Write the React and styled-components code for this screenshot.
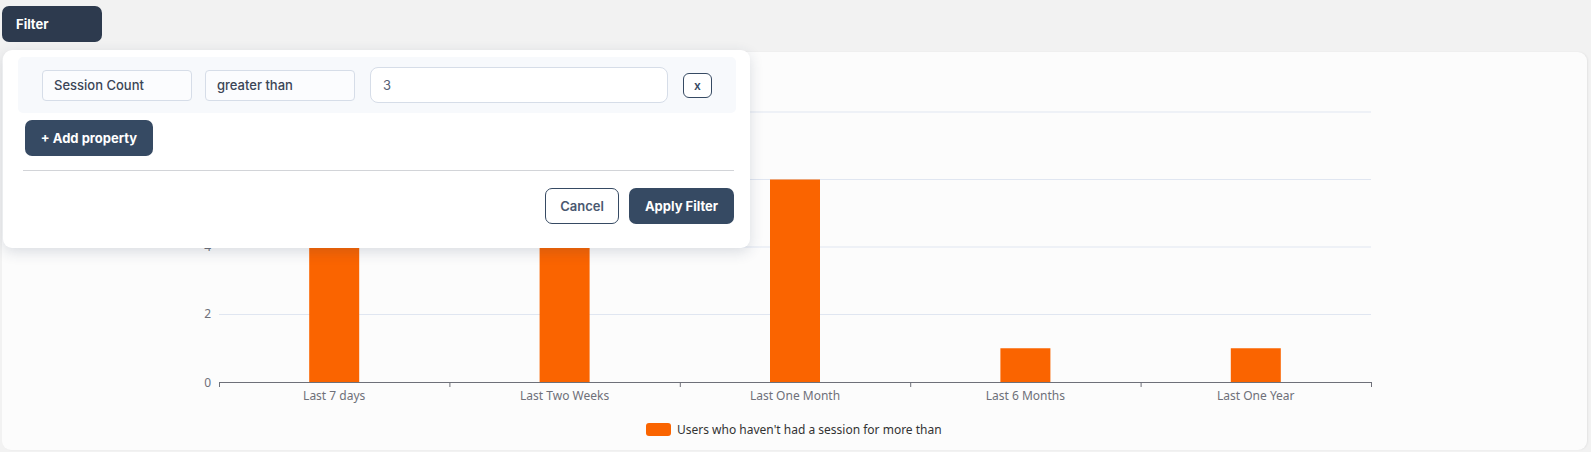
import React from 'react';
import styled, { createGlobalStyle } from 'styled-components';

const GlobalStyle = createGlobalStyle`
  html, body {
    margin: 0;
    padding: 0;
    background: #f2f2f2;
  }
  body {
    font-family: Inter, "Noto Sans", sans-serif;
  }
`;

const Page = styled.div`
  padding: 6px 4px 2px 2px;
  box-sizing: border-box;
`;

const Toolbar = styled.div`
  position: relative;
  display: flex;
  z-index: 2;
`;

const DarkButton = styled.button`
  display: block;
  font-family: Inter, sans-serif;
  font-weight: 700;
  font-size: 13px;
  color: #ffffff;
  background: ${(p) => (p.$deep ? '#2d3a4e' : '#364a63')};
  border: none;
  border-radius: 7px;
  height: ${(p) => p.$h || 36}px;
  width: ${(p) => p.$w}px;
  padding: 0 0 0 ${(p) => (p.$left ? '14px' : '0')};
  text-align: ${(p) => (p.$left ? 'left' : 'center')};
  cursor: pointer;
`;

const OutlineButton = styled.button`
  display: block;
  font-family: Inter, sans-serif;
  font-weight: 600;
  font-size: 13px;
  color: #4a5870;
  background: #ffffff;
  border: 1px solid #364a63;
  border-radius: 7px;
  height: 36px;
  width: 74px;
  cursor: pointer;
`;

const Popover = styled.div`
  position: absolute;
  top: 44px;
  left: 1px;
  width: 747px;
  box-sizing: border-box;
  padding: 7px 14px 24px 15px;
  background: #ffffff;
  border-radius: 9px;
  box-shadow: 0 4px 14px rgba(40, 55, 90, 0.16);
`;

const PropertyRow = styled.div`
  display: flex;
  align-items: center;
  height: 56px;
  padding: 0 24px;
  background: #f7f9fc;
  border-radius: 5px;
`;

const SelectBox = styled.div`
  width: 150px;
  height: 31px;
  box-sizing: border-box;
  margin-right: ${(p) => p.$gap}px;
  padding-left: 11px;
  display: flex;
  align-items: center;
  font-size: 13px;
  font-weight: 500;
  color: #3a4556;
  background: #fbfcfe;
  border: 1px solid #d6dde8;
  border-radius: 4px;
`;

const ValueInput = styled.input`
  width: 298px;
  height: 36px;
  box-sizing: border-box;
  margin-right: 15px;
  padding: 0 12px;
  font-family: Inter, sans-serif;
  font-size: 13px;
  color: #566175;
  background: #ffffff;
  border: 1px solid #d6dde8;
  border-radius: 8px;
  outline: none;
`;

const RemoveButton = styled.button`
  width: 29px;
  height: 25px;
  padding: 0;
  font-family: Inter, sans-serif;
  font-size: 12px;
  font-weight: 600;
  color: #364a63;
  background: #ffffff;
  border: 1px solid #364a63;
  border-radius: 6px;
`;

const AddRow = styled.div`
  margin: 7px 0 0 7px;
`;

const Divider = styled.hr`
  margin: 14px 2px 0 5px;
  border: none;
  border-top: 1px solid #d2d4d8;
`;

const Footer = styled.div`
  display: flex;
  justify-content: flex-end;
  gap: 10px;
  margin-top: 17px;
  padding-right: 2px;
`;

const Card = styled.div`
  margin-top: 10px;
  height: 398px;
  background: #fcfcfc;
  border-radius: 9px;
  box-shadow: 1px 0 2px rgba(0, 0, 0, 0.06);
  overflow: hidden;
`;

const ChartSvg = styled.svg`
  display: block;
  font-family: "Noto Sans", sans-serif;
  font-size: 12px;
`;

const categories = [
  { label: 'Last 7 days', value: 5 },
  { label: 'Last Two Weeks', value: 5 },
  { label: 'Last One Month', value: 6 },
  { label: 'Last 6 Months', value: 1 },
  { label: 'Last One Year', value: 1 },
];

const X0 = 217;
const X1 = 1369;
const Y0 = 330;
const UNIT = 33.75;
const BAND = (X1 - X0) / categories.length;

function BarChart() {
  return (
    <ChartSvg width="100%" height="398" viewBox="0 0 1585 398" preserveAspectRatio="xMinYMin meet">
      {[2, 4, 6, 8].map((v) => (
        <g key={v}>
          <line x1={X0} x2={X1} y1={Y0 - v * UNIT} y2={Y0 - v * UNIT} stroke="#e0e6f1" strokeWidth="1" />
          <text x={209} y={Y0 - v * UNIT - 1} textAnchor="end" dominantBaseline="central" fill="#6e7079">
            {v}
          </text>
        </g>
      ))}
      <text x={209} y={Y0} textAnchor="end" dominantBaseline="central" fill="#6e7079">
        0
      </text>
      {categories.map((c, i) => {
        const cx = X0 + BAND * (i + 0.5);
        const h = c.value * UNIT;
        return (
          <g key={c.label}>
            <rect x={cx - 25} y={Y0 - h} width="50" height={h} fill="#fa6400" />
            <text x={cx} y={343} textAnchor="middle" dominantBaseline="central" fill="#6e7079">
              {c.label}
            </text>
          </g>
        );
      })}
      <line x1={X0} x2={X1} y1={Y0 + 0.5} y2={Y0 + 0.5} stroke="#6e7079" strokeWidth="1" />
      {categories.map((c, i) => (
        <line
          key={`t${c.label}`}
          x1={X0 + BAND * i + 0.5}
          x2={X0 + BAND * i + 0.5}
          y1={Y0}
          y2={Y0 + 5}
          stroke="#6e7079"
        />
      ))}
      <line x1={X1 + 0.5} x2={X1 + 0.5} y1={Y0} y2={Y0 + 5} stroke="#6e7079" />
      <rect x={644} y={371} width="25" height="13" rx="3" fill="#fa6400" />
      <text x={675} y={377.5} dominantBaseline="central" fill="#333333">
        Users who haven't had a session for more than
      </text>
    </ChartSvg>
  );
}

function FilterPanel() {
  return (
    <Popover>
      <PropertyRow>
        <SelectBox $gap={13}>Session Count</SelectBox>
        <SelectBox $gap={15}>greater than</SelectBox>
        <ValueInput defaultValue="3" />
        <RemoveButton>x</RemoveButton>
      </PropertyRow>
      <AddRow>
        <DarkButton $w={128}>+ Add property</DarkButton>
      </AddRow>
      <Divider />
      <Footer>
        <OutlineButton>Cancel</OutlineButton>
        <DarkButton $w={105}>Apply Filter</DarkButton>
      </Footer>
    </Popover>
  );
}

export default function App() {
  return (
    <>
      <GlobalStyle />
      <Page>
        <Toolbar>
          <DarkButton $deep $left $w={100}>Filter</DarkButton>
          <FilterPanel />
        </Toolbar>
        <Card>
          <BarChart />
        </Card>
      </Page>
    </>
  );
}
